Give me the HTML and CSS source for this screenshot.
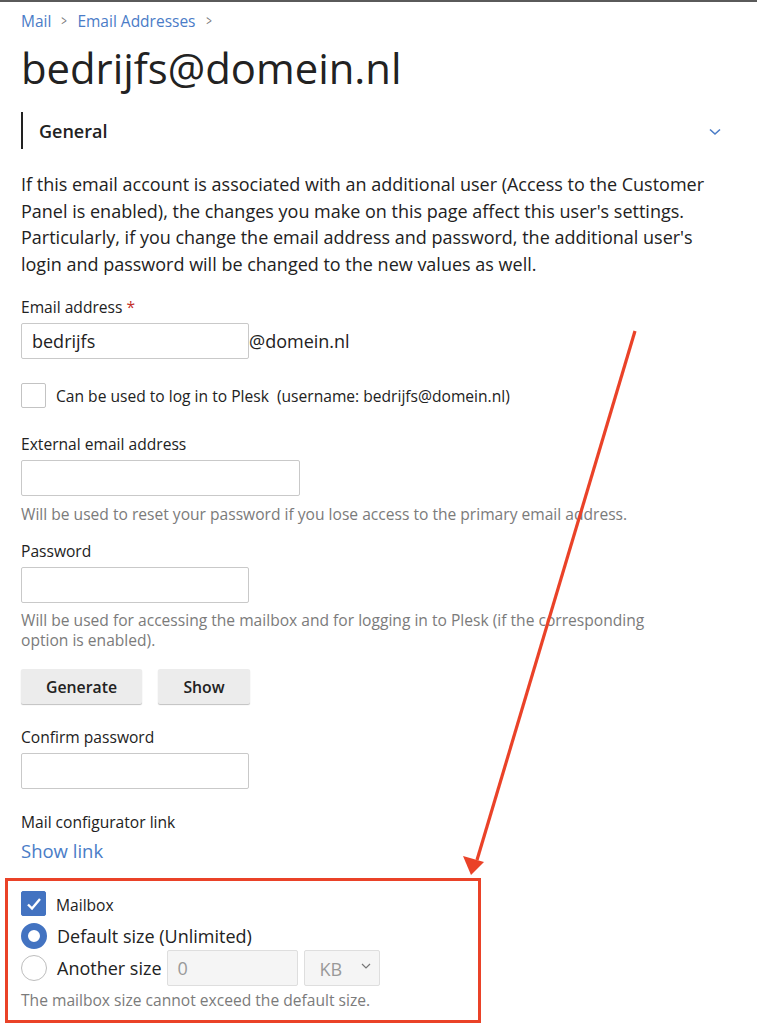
FILE: index.html
```html
<!DOCTYPE html>
<html>
<head>
<meta charset="utf-8">
<link rel="stylesheet" href="styles.css">
</head>
<body>
<div class="page">
  <nav class="crumbs">
    <a href="#">Mail</a><span class="sep">&gt;</span><a href="#">Email Addresses</a><span class="sep">&gt;</span>
  </nav>
  <h1 class="title">bedrijfs@domein.nl</h1>
  <div class="section-head">
    <span class="section-title">General</span>
    <svg class="chev" width="12" height="8" viewBox="0 0 12 8"><path d="M1 1.5 L6 6 L11 1.5" fill="none" stroke="#4a7cc7" stroke-width="1.6"/></svg>
  </div>
  <p class="intro">If this email account is associated with an additional user (Access to the Customer Panel is enabled), the changes you make on this page affect this user's settings. Particularly, if you change the email address and password, the additional user's login and password will be changed to the new values as well.</p>

  <div class="field f-email">
    <div class="label">Email address <span class="req">*</span></div>
    <div class="inline">
      <div class="input w228 value">bedrijfs</div><span class="domain">@domein.nl</span>
    </div>
  </div>

  <div class="check-row">
    <span class="box"></span>
    <span class="check-text">Can be used to log in to Plesk&nbsp; (username: bedrijfs@domein.nl)</span>
  </div>

  <div class="field f-ext">
    <div class="label">External email address</div>
    <div class="input w279"></div>
    <div class="hint">Will be used to reset your password if you lose access to the primary email address.</div>
  </div>

  <div class="field f-pass">
    <div class="label">Password</div>
    <div class="input w228"></div>
    <div class="hint narrow">Will be used for accessing the mailbox and for logging in to Plesk (if the corresponding option is enabled).</div>
  </div>

  <div class="buttons">
    <button class="btn b-gen">Generate</button>
    <button class="btn b-show">Show</button>
  </div>

  <div class="field">
    <div class="label">Confirm password</div>
    <div class="input w228"></div>
  </div>

  <div class="field">
    <div class="label">Mail configurator link</div>
    <a class="showlink" href="#">Show link</a>
  </div>

  <div class="mailbox">
    <div class="mb-row">
      <span class="box checked"><svg width="16" height="14" viewBox="0 0 16 14"><path d="M2 7.5 L6 11.5 L14 2" fill="none" stroke="#fff" stroke-width="2.4"/></svg></span>
      <span class="mb-label">Mailbox</span>
    </div>
    <div class="radio-row r-default">
      <span class="radio on"></span>
      <span class="radio-text">Default size (Unlimited)</span>
    </div>
    <div class="radio-row r-another">
      <span class="radio"></span>
      <span class="radio-text">Another size</span>
      <div class="input disabled w130">0</div>
      <div class="select disabled">KB<svg width="10" height="6" viewBox="0 0 10 6"><path d="M1 1 L5 5 L9 1" fill="none" stroke="#777" stroke-width="1.2"/></svg></div>
    </div>
    <div class="hint mb-hint">The mailbox size cannot exceed the default size.</div>
  </div>
</div>
<svg class="arrow" width="757" height="1030" viewBox="0 0 757 1030">
  <line x1="635" y1="331" x2="477" y2="860" stroke="#ea4228" stroke-width="3.2"/>
  <polygon points="471,875 463,856 484,862" fill="#ea4228"/>
</svg>
</body>
</html>
```

FILE: styles.css
```css
html, body {
  margin: 0;
  padding: 0;
  background: #fff;
}
body {
  font-family: "Open Sans", "Noto Sans", sans-serif;
  color: #222;
  border-top: 2px solid #5a5a5a;
  position: relative;
  min-height: 1028px;
}
.page {
  padding: 0 21px;
}
.crumbs {
  font-size: 15.5px;
  line-height: 20px;
  padding-top: 9px;
  display: flex;
  align-items: center;
}
.crumbs a {
  color: #4a7cc7;
  text-decoration: none;
}
.crumbs .sep {
  color: #777;
  margin: 0 9px;
  font-size: 14px;
  transform: scaleX(0.7);
  display: inline-block;
}
.title {
  font-size: 41.8px;
  font-weight: 400;
  line-height: 54px;
  margin: 10px 0 0;
  color: #222;
}
.section-head {
  margin-top: 17px;
  height: 37px;
  border-left: 2px solid #222;
  display: flex;
  align-items: center;
  justify-content: space-between;
  padding-left: 16px;
  padding-right: 15px;
}
.section-title {
  font-size: 18px;
  font-weight: 600;
  color: #222;
}
.chev {
  margin-top: 2px;
}
.intro {
  font-size: 18px;
  line-height: 26.6px;
  margin: 22px 0 0;
  color: #222;
}
.field {
  margin-top: 23px;
}
.f-email {
  margin-top: 20px;
}
.label {
  font-size: 15.6px;
  line-height: 20px;
  color: #222;
  margin-bottom: 6px;
}
.req {
  color: #c4302b;
}
.inline {
  display: flex;
  align-items: center;
}
.input {
  box-sizing: border-box;
  height: 36px;
  border: 1px solid #c9c9c9;
  border-radius: 2px;
  background: #fff;
  font-size: 18px;
  line-height: 34px;
  padding: 0 10px;
}
.value {
  color: #222;
}
.w228 { width: 228px; }
.w279 { width: 279px; }
.w130 { width: 131px; }
.domain {
  font-size: 18px;
  margin-left: 0;
}
.check-row {
  margin-top: 24px;
  display: flex;
  align-items: center;
}
.box {
  box-sizing: border-box;
  width: 25px;
  height: 25px;
  border: 1px solid #c3c3c3;
  border-radius: 2px;
  display: inline-flex;
  align-items: center;
  justify-content: center;
  flex: none;
}
.box.checked {
  background: #4373c1;
  border-color: #4373c1;
}
.check-text {
  font-size: 15.6px;
  margin-left: 10px;
  color: #222;
}
.f-ext {
  margin-top: 26px;
}
.f-pass {
  margin-top: 17px;
}
.hint {
  font-size: 15.6px;
  line-height: 20px;
  color: #7b7b7b;
  margin-top: 8px;
}
.f-pass .hint {
  margin-top: 7px;
}
.hint.narrow {
  max-width: 650px;
}
.buttons {
  margin-top: 19px;
  display: flex;
  gap: 16px;
}
.btn {
  font-family: inherit;
  font-size: 15.8px;
  font-weight: 600;
  color: #222;
  background: #ececec;
  border: none;
  border-radius: 2px;
  height: 35px;
  box-shadow: 0 1px 1px rgba(0,0,0,0.25);
  padding: 0;
}
.b-gen { width: 121px; }
.b-show { width: 92px; }
.showlink {
  display: block;
  font-size: 18.5px;
  line-height: 24px;
  color: #4a7cc7;
  text-decoration: none;
  margin-top: 7px;
}
.mailbox {
  margin: 15px 0 0 -16px;
  width: 476px;
  box-sizing: border-box;
  border: 3px solid #ea4228;
  padding: 10px 0 10px 13px;
}
.mb-row {
  display: flex;
  align-items: center;
}
.mb-label {
  font-size: 15.6px;
  margin-left: 10px;
  margin-top: 2px;
}
.radio-row {
  display: flex;
  align-items: center;
}
.r-default {
  margin-top: 7px;
}
.r-another {
  margin-top: 1px;
}
.radio {
  box-sizing: border-box;
  width: 26px;
  height: 26px;
  border-radius: 50%;
  border: 1px solid #bdbdbd;
  background: #fff;
  flex: none;
}
.radio.on {
  border: 7px solid #4373c1;
}
.radio-text {
  font-size: 18px;
  margin-left: 10px;
  color: #222;
}
.input.disabled, .select.disabled {
  background: #f5f5f5;
  border-color: #dedede;
  color: #999;
}
.input.disabled {
  margin-left: 5px;
}
.select {
  box-sizing: border-box;
  height: 36px;
  width: 76px;
  margin-left: 6px;
  border: 1px solid #dedede;
  border-radius: 2px;
  font-size: 18px;
  display: flex;
  align-items: center;
  justify-content: space-between;
  padding: 2px 8px 0 15px;
}
.select svg {
  margin-top: -6px;
}
.mb-hint {
  margin-top: 4px;
}
.arrow {
  position: absolute;
  left: 0;
  top: -2px;
  pointer-events: none;
}
```
